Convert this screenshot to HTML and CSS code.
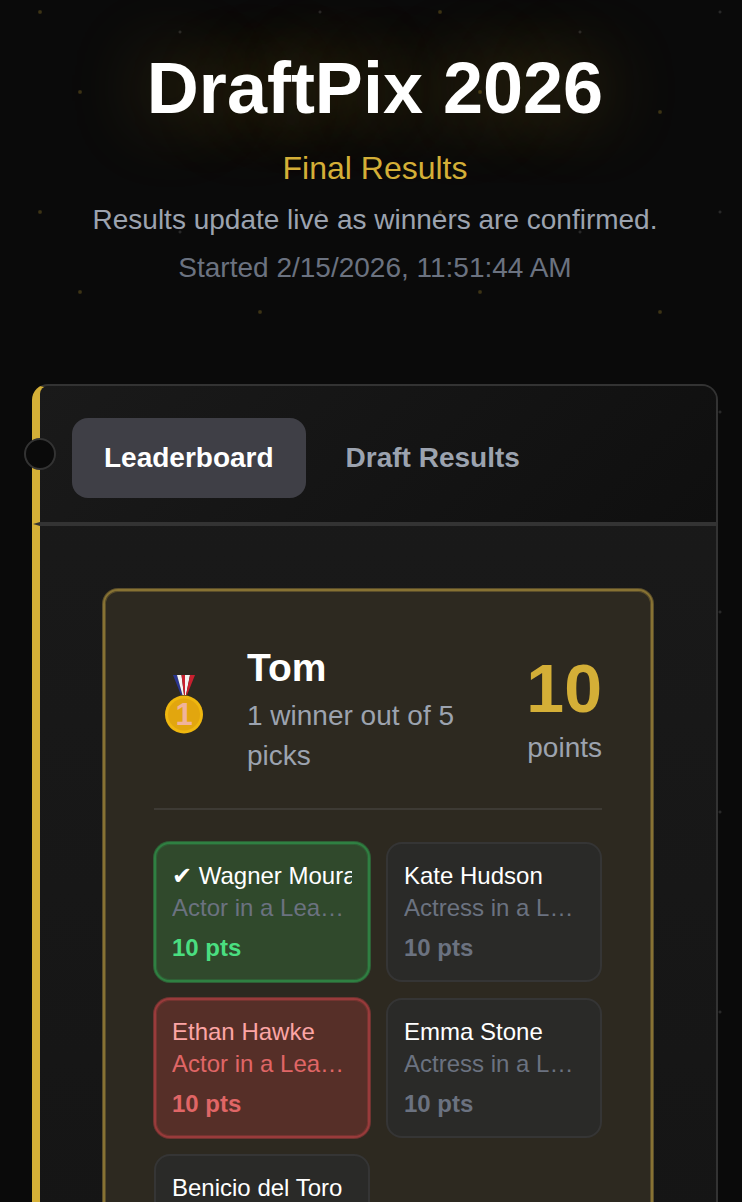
FILE: index.html
```html
<!DOCTYPE html>
<html lang="en">
<head>
    <meta charset="UTF-8">
    <meta name="viewport" content="width=device-width, initial-scale=1.0">
    <title>DraftPix 2026</title>
    <link rel="stylesheet" href="styles.css">
</head>
<body>

    <div class="header">
        <h1>DraftPix 2026</h1>
        <p class="subtitle">Final Results</p>
        <p class="note">Results update live as winners are confirmed.</p>
        <p class="started">Started 2/15/2026, 11:51:44 AM</p>
    </div>

    <div class="card">
        <span class="notch"></span>
        <span class="tip"></span>

        <div class="tabs">
            <button class="tab active">Leaderboard</button>
            <button class="tab">Draft Results</button>
        </div>

        <div class="card-body">
            <div class="player">
                <div class="player-head">
                    <svg class="medal" viewBox="0 0 40 62" width="40" height="62">
                        <path d="M9 1h4l5.5 20H17z" fill="#2a3590"/>
                        <path d="M13 1h4.5l2.5 20h-1.5z" fill="#f3f3f3"/>
                        <path d="M17.5 1H21v20h-1z" fill="#c8202f"/>
                        <path d="M21 1h5l-4 20h-1z" fill="#f3f3f3"/>
                        <path d="M26 1h5l-8 20h-1z" fill="#c8202f"/>
                        <circle cx="20" cy="40.5" r="19" fill="#efb70f"/>
                        <circle cx="20" cy="40.5" r="16" fill="#e2a60e"/>
                        <text class="medal-num" x="20" y="51">1</text>
                    </svg>
                    <div class="player-info">
                        <div class="player-name">Tom</div>
                        <div class="player-sub">1 winner out of 5 picks</div>
                    </div>
                    <div class="score">
                        <div class="score-num">10</div>
                        <div class="score-label">points</div>
                    </div>
                </div>

                <div class="picks">
                    <div class="pick won">
                        <div class="pick-name">✔ Wagner Moura</div>
                        <div class="pick-cat">Actor in a Leading Role</div>
                        <div class="pick-pts">10 pts</div>
                    </div>
                    <div class="pick">
                        <div class="pick-name">Kate Hudson</div>
                        <div class="pick-cat">Actress in a Leading Role</div>
                        <div class="pick-pts">10 pts</div>
                    </div>
                    <div class="pick lost">
                        <div class="pick-name">Ethan Hawke</div>
                        <div class="pick-cat">Actor in a Leading Role</div>
                        <div class="pick-pts">10 pts</div>
                    </div>
                    <div class="pick">
                        <div class="pick-name">Emma Stone</div>
                        <div class="pick-cat">Actress in a Leading Role</div>
                        <div class="pick-pts">10 pts</div>
                    </div>
                    <div class="pick">
                        <div class="pick-name">Benicio del Toro</div>
                        <div class="pick-cat">Actor in a Supporting Role</div>
                        <div class="pick-pts">10 pts</div>
                    </div>
                </div>
            </div>
        </div>
    </div>

</body>
</html>
```

FILE: styles.css
```css
html, body {
    height: 100%;
    overflow: hidden;
}

body {
    margin: 0;
    padding: 0;
    font-family: 'Liberation Sans', Arial, sans-serif;
    color: white;
    background-color: #0a0a0a;
    background-image:
        radial-gradient(circle at 40px 12px, rgba(212, 175, 55, 0.3) 0, rgba(212, 175, 55, 0.2) 1.5px, transparent 2.5px),
        radial-gradient(circle at 320px 12px, rgba(255, 255, 255, 0.18) 0, rgba(255, 255, 255, 0.1) 1px, transparent 2px),
        radial-gradient(circle at 180px 32px, rgba(255, 255, 255, 0.18) 0, rgba(255, 255, 255, 0.1) 1px, transparent 2px),
        radial-gradient(circle at 80px 92px, rgba(212, 175, 55, 0.3) 0, rgba(212, 175, 55, 0.2) 1.5px, transparent 2.5px),
        radial-gradient(circle at 260px 112px, rgba(212, 175, 55, 0.3) 0, rgba(212, 175, 55, 0.2) 1.5px, transparent 2.5px);
    background-size: 400px 200px;
}

/* Header */
.header {
    text-align: center;
    padding: 48px 0 0 8px;
    height: 336px;
    box-sizing: border-box;
}

.header h1 {
    margin: 0;
    font-size: 72px;
    line-height: 80px;
    font-weight: bold;
    text-shadow: 0 0 80px rgba(212, 175, 55, 0.45);
}

.subtitle {
    margin: 20px 0 0;
    font-size: 32px;
    line-height: 40px;
    color: #d4af37;
}

.note {
    margin: 12px 0 0;
    font-size: 28px;
    line-height: 40px;
    color: #9ca3af;
}

.started {
    margin: 8px 0 0;
    font-size: 28px;
    line-height: 40px;
    color: #6b7280;
}

/* Main card */
.card {
    position: relative;
    margin: 48px 24px 0 32px;
    background: linear-gradient(180deg, #1a1a1a, #141414);
    border: 2px solid #333;
    border-left: 8px solid #d4af37;
    border-radius: 16px;
}

.notch {
    position: absolute;
    top: 52px;
    left: -16px;
    width: 28px;
    height: 28px;
    background-color: #0a0a0a;
    border: 2px solid #333;
    border-radius: 50%;
}

.tip {
    position: absolute;
    top: 136px;
    left: -7px;
    border-top: 2px solid transparent;
    border-bottom: 2px solid transparent;
    border-right: 7px solid #333;
}

.tabs {
    display: flex;
    gap: 8px;
    padding: 32px 32px 24px;
    background: linear-gradient(135deg, #1a1a1a, #0f0f0f);
    border-bottom: 4px solid #333;
    border-top-right-radius: 14px;
    border-top-left-radius: 8px;
}

.tab {
    height: 80px;
    padding: 0 32px;
    font-family: inherit;
    font-size: 28px;
    font-weight: bold;
    color: #9ca3af;
    background: none;
    border: none;
    border-radius: 16px;
}

.tab.active {
    color: white;
    background-color: #3f3f46;
}

.card-body {
    padding: 63px 63px 48px;
}

/* Player panel */
.player {
    padding: 49px;
    background-color: #2d2920;
    border: 2px solid #877233;
    border-radius: 15px;
    box-shadow: 0 0 0 1px #5a4d2a, inset 0 0 0 1px #5a4d2a;
}

.player-head {
    display: flex;
    align-items: center;
    padding-bottom: 32px;
    border-bottom: 2px solid #3d3a34;
}

.medal {
    flex: none;
    margin: 0 43px 6px 10px;
}

.medal-num {
    font-family: 'Liberation Sans', sans-serif;
    font-size: 31px;
    font-weight: bold;
    text-anchor: middle;
    fill: #f0b39c;
}

.player-info {
    flex: 1;
}

.player-name {
    font-size: 39px;
    line-height: 56px;
    font-weight: bold;
}

.player-sub {
    font-size: 28px;
    line-height: 40px;
    color: #9ca3af;
    padding-right: 40px;
}

.score {
    flex: none;
    text-align: right;
}

.score-num {
    font-size: 68px;
    line-height: 80px;
    font-weight: bold;
    color: #d4af37;
}

.score-label {
    font-size: 28px;
    line-height: 40px;
    color: #9ca3af;
}

/* Picks grid */
.picks {
    display: grid;
    grid-template-columns: 1fr 1fr;
    gap: 16px;
    margin-top: 32px;
}

.pick {
    min-width: 0;
    padding: 16px;
    background-color: #2a2a28;
    border: 2px solid #353535;
    border-radius: 16px;
    font-size: 24px;
    line-height: 32px;
}

.pick-name {
    white-space: nowrap;
    overflow: hidden;
}

.pick-cat {
    white-space: nowrap;
    overflow: hidden;
    text-overflow: ellipsis;
    color: #6b7280;
}

.pick-pts {
    margin-top: 8px;
    font-weight: bold;
    color: #6b7280;
}

.pick.won {
    background-color: #30492c;
    border-color: #2f8042;
    box-shadow: 0 0 0 1px #2e5f35, inset 0 0 0 1px #2f5f35;
}

.pick.won .pick-pts {
    color: #4ade80;
}

.pick.lost {
    background-color: #562f28;
    border-color: #993b3b;
    box-shadow: 0 0 0 1px #6f3330, inset 0 0 0 1px #743430;
}

.pick.lost .pick-name {
    color: #fca5a5;
}

.pick.lost .pick-cat,
.pick.lost .pick-pts {
    color: #e06666;
}
```
